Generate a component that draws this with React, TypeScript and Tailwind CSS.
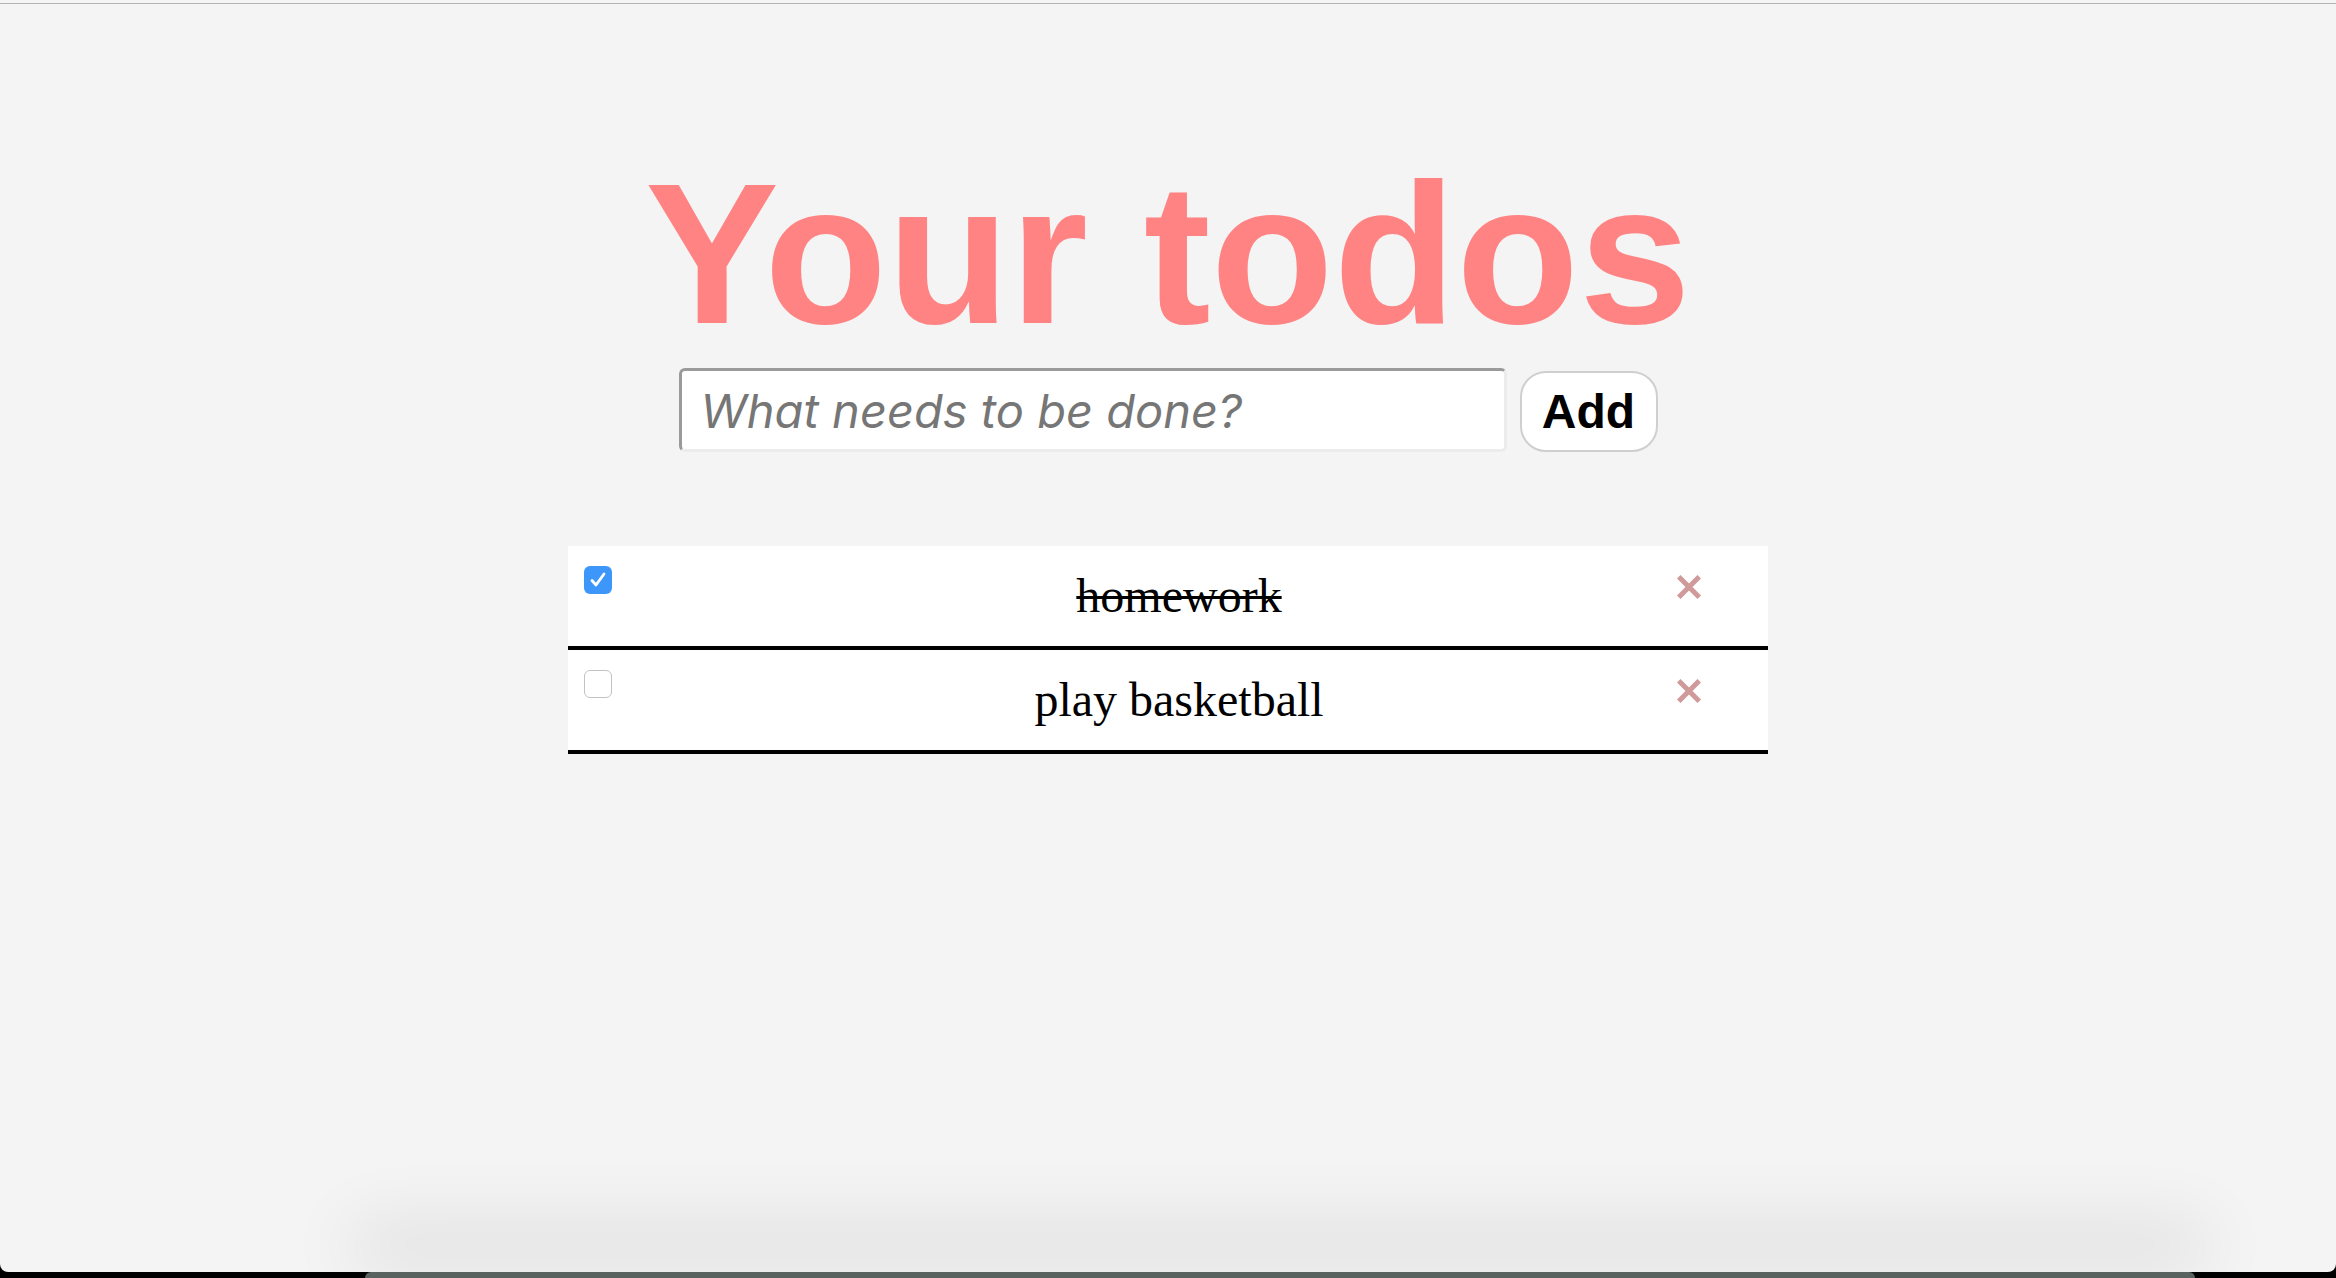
import { useState } from "react";

type Todo = { id: number; text: string; done: boolean };

const CheckBox = ({ checked, onToggle }: { checked: boolean; onToggle: () => void }) => {
  if (checked) {
    return (
      <button onClick={onToggle} className="flex h-[28px] w-[28px] shrink-0 items-center justify-center rounded-[6px] bg-[#3d97fb]">
        <svg width="20" height="20" viewBox="0 0 20 20" fill="none">
          <path d="M4 10.5 L8 15 L16 4" stroke="white" strokeWidth="2.8" strokeLinecap="round" strokeLinejoin="round" />
        </svg>
      </button>
    );
  }
  return (
    <button onClick={onToggle} className="h-[28px] w-[28px] shrink-0 rounded-[6px] border-[1.5px] border-[#c2c2c2] bg-white" />
  );
};

const TodoRow = ({ todo, onToggle, onRemove }: { todo: Todo; onToggle: () => void; onRemove: () => void }) => {
  return (
    <li className="flex h-[104px] items-start border-b-4 border-black bg-white">
      <div className="ml-4 mt-5">
        <CheckBox checked={todo.done} onToggle={onToggle} />
      </div>
      <p
        className={
          "ml-[81px] flex-1 pt-[26px] text-center text-[48px] leading-none text-black font-['Liberation_Serif',serif] " +
          (todo.done ? "line-through decoration-[3px]" : "")
        }
      >
        {todo.text}
      </p>
      <div className="w-[103px] pl-3 pt-[29px]">
        <button onClick={onRemove} className="block">
          <svg width="24" height="24" viewBox="0 0 24 24">
            <path d="M3.5 3.5 L20.5 20.5 M20.5 3.5 L3.5 20.5" stroke="#d09a9a" strokeWidth="5" strokeLinecap="square" />
          </svg>
        </button>
      </div>
    </li>
  );
};

export default function App() {
  const [todos, setTodos] = useState<Todo[]>([
    { id: 1, text: "homework", done: true },
    { id: 2, text: "play basketball", done: false },
  ]);
  const [value, setValue] = useState("");

  const add = () => {
    if (!value.trim()) return;
    setTodos([...todos, { id: Date.now(), text: value, done: false }]);
    setValue("");
  };

  return (
    <div className="flex h-[1278px] w-full flex-col bg-black">
      <div className="flex flex-1 flex-col rounded-b-[8px] bg-[#f4f4f4] pt-[3px]">
        <div className="flex flex-1 flex-col items-center border-t border-[#b3b3b3] pt-[149px]">
          <h1 className="text-[201px] font-bold leading-none text-[#ff8383] font-['Liberation_Sans',Arial,sans-serif]">
            Your todos
          </h1>
          <div className="mt-[14px] flex items-center gap-[13px]">
            <input
              value={value}
              onChange={(e) => setValue(e.target.value)}
              placeholder="What needs to be done?"
              className="h-[84px] w-[828px] rounded-[6px] border-[3px] border-t-[#9a9a9a] border-l-[#9a9a9a] border-r-[#ececec] border-b-[#ececec] bg-white px-[19px] text-[47px] text-black outline-none placeholder:italic placeholder:text-[#767676] font-['Inter',sans-serif]"
            />
            <button
              onClick={add}
              className="mt-[3px] h-[81px] w-[138px] rounded-[26px] border-2 border-[#cfcfcf] bg-white text-[48px] font-bold text-black font-['Liberation_Sans',Arial,sans-serif]"
            >
              Add
            </button>
          </div>
          <ul className="mt-[94px] w-[1200px]">
            {todos.map((t) => (
              <TodoRow
                key={t.id}
                todo={t}
                onToggle={() => setTodos(todos.map((x) => (x.id === t.id ? { ...x, done: !x.done } : x)))}
                onRemove={() => setTodos(todos.filter((x) => x.id !== t.id))}
              />
            ))}
          </ul>
        </div>
      </div>
      <div className="flex h-[6px]">
        <div className="ml-[365px] h-full w-[1830px] rounded-t-[8px] bg-[#59625f] shadow-[0_-30px_70px_14px_rgba(0,0,0,0.12)]" />
      </div>
    </div>
  );
}
